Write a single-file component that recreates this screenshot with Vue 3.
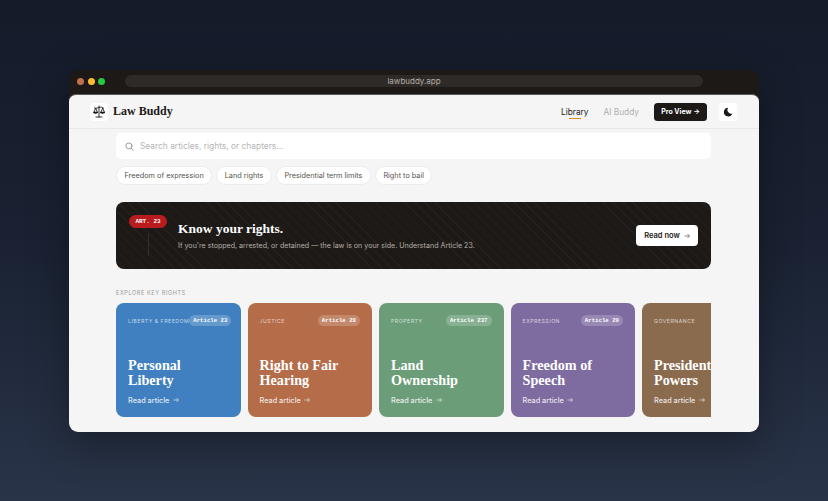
<script setup>
const chips = ['Freedom of expression', 'Land rights', 'Presidential term limits', 'Right to bail']

const cards = [
    { tag: 'Liberty & Freedom', article: 'Article 23', title: ['Personal', 'Liberty'], color: '#4080c0' },
    { tag: 'Justice', article: 'Article 28', title: ['Right to Fair', 'Hearing'], color: '#b56c48' },
    { tag: 'Property', article: 'Article 237', title: ['Land', 'Ownership'], color: '#6b9e78' },
    { tag: 'Expression', article: 'Article 29', title: ['Freedom of', 'Speech'], color: '#7e6ca0' },
    { tag: 'Governance', article: 'Article 98', title: ['Presidential', 'Powers'], color: '#8b6b4e' },
]
</script>

<template>
    <div class="page">
        <div class="window">
            <!-- Browser chrome -->
            <div class="chrome">
                <div class="dots">
                    <span class="dot red"></span>
                    <span class="dot yellow"></span>
                    <span class="dot green"></span>
                </div>
                <div class="url">lawbuddy.app</div>
            </div>

            <div class="content">
                <header class="nav">
                    <div class="brand">
                        <span class="logo">
                            <svg width="12" height="13" viewBox="0 0 24 26" fill="none" stroke="#1c1917" stroke-width="1.800" stroke-linecap="round" stroke-linejoin="round">
                                <path d="M12 2v22" />
                                <path d="M6 24h12" />
                                <path d="M3 6c3 1 6 0 9-1s6-1 9 1" />
                                <path d="M5 7l-3.500 8c1 2.500 6 2.500 7 0z" />
                                <path d="M19 7l-3.500 8c1 2.500 6 2.500 7 0z" />
                                <path d="M2 15h6.500M15.500 15h7" stroke-width="3" />
                            </svg>
                        </span>
                        <span class="brand-name">Law Buddy</span>
                    </div>
                    <nav class="links">
                        <span class="link active">Library</span>
                        <span class="link">AI Buddy</span>
                    </nav>
                    <button class="pro">Pro View →</button>
                    <button class="theme">
                        <svg width="10" height="10" viewBox="0 0 24 24" fill="#1c1917">
                            <path d="M12.500 1.500a10.500 10.500 0 1 0 10 14A9 9 0 0 1 12.500 1.500z" />
                        </svg>
                    </button>
                </header>

                <main class="main">
                    <div class="search">
                        <svg width="9" height="9" viewBox="0 0 24 24" fill="none" stroke="#8a8a8a" stroke-width="2.200" stroke-linecap="round">
                            <circle cx="10.500" cy="10.500" r="8" />
                            <path d="M16.500 16.500L22 22" />
                        </svg>
                        <span>Search articles, rights, or chapters...</span>
                    </div>

                    <div class="chips">
                        <span v-for="chip in chips" :key="chip" class="chip">{{ chip }}</span>
                    </div>

                    <section class="banner">
                        <div class="pin">
                            <span class="pin-badge">ART. 23</span>
                            <span class="pin-line"></span>
                        </div>
                        <div class="banner-text">
                            <h2>Know your rights.</h2>
                            <p>If you're stopped, arrested, or detained — the law is on your side. Understand Article 23.</p>
                        </div>
                        <button class="read-now">
                            Read now
                            <svg width="6" height="6" viewBox="0 0 12 12" fill="none" stroke="#44403c" stroke-width="1.200">
                                <path d="M1 6h10M7 2l4 4-4 4" />
                            </svg>
                        </button>
                    </section>

                    <div class="section-label">Explore key rights</div>

                    <div class="cards">
                        <article v-for="card in cards" :key="card.article" class="card" :style="{ background: card.color }">
                            <div class="card-top">
                                <span class="card-tag">{{ card.tag }}</span>
                                <span class="card-article">{{ card.article }}</span>
                            </div>
                            <h3>
                                <span v-for="line in card.title" :key="line">{{ line }}</span>
                            </h3>
                            <div class="card-link">
                                Read article
                                <svg width="6" height="6" viewBox="0 0 12 12" fill="none" stroke="currentColor" stroke-width="1.300">
                                    <path d="M1 6h10M7 2l4 4-4 4" />
                                </svg>
                            </div>
                        </article>
                    </div>
                </main>
            </div>
        </div>
    </div>
</template>

<style scoped>
    .page {
        width: 828px;
        height: 501px;
        box-sizing: border-box;
        padding: 70px 69px 0;
        overflow: hidden;
        background: linear-gradient(180deg, #141b29 0%, #1a2233 50%, #2a3449 100%);
        font-family: Inter, 'Liberation Sans', sans-serif;
    }

    .window {
        width: 690px;
        height: 362px;
        border-radius: 9px;
        overflow: hidden;
        background: #1c1917;
        box-shadow: 0 12px 40px rgba(0, 0, 0, 0.35);
    }

    .chrome {
        height: 24px;
        box-sizing: border-box;
        display: flex;
        align-items: center;
        padding: 0 8px 2px;
        gap: 20px;
    }
    .dots {
        display: flex;
        gap: 3.500px;
    }
    .dot {
        width: 7px;
        height: 7px;
        border-radius: 50%;
    }
    .red {
        background: #c0714f;
    }
    .yellow {
        background: #febc2e;
    }
    .green {
        background: #28c840;
    }
    .url {
        width: 578px;
        height: 12px;
        border-radius: 6px;
        background: #2e2a27;
        color: #b5afaa;
        font-size: 8px;
        line-height: 12px;
        text-align: center;
    }

    .content {
        height: 338px;
        background: #f5f5f5;
        border-top: 1px solid #5a5a60;
        border-radius: 7px 7px 0 0;
        box-sizing: border-box;
    }

    .nav {
        height: 34px;
        box-sizing: border-box;
        display: flex;
        align-items: center;
        padding: 0 22px 0 21px;
        border-bottom: 1px solid #e8e8e8;
    }
    .brand {
        display: flex;
        align-items: center;
        gap: 5px;
        margin-right: auto;
    }
    .logo {
        width: 18px;
        height: 18px;
        border-radius: 4px;
        background: #fff;
        display: flex;
        align-items: center;
        justify-content: center;
    }
    .brand-name {
        font-family: 'Liberation Serif', serif;
        font-weight: 700;
        font-size: 12px;
        color: #1c1917;
    }
    .links {
        display: flex;
        gap: 15px;
        margin-right: 15px;
    }
    .link {
        position: relative;
        font-size: 8.300px;
        line-height: 10px;
        color: #b0b0b0;
    }
    .link.active {
        color: #1c1917;
    }
    .link.active::after {
        content: '';
        position: absolute;
        left: 8px;
        right: 8px;
        bottom: -2px;
        height: 1px;
        background: #e08a2c;
    }
    .pro {
        width: 53px;
        height: 18px;
        margin-right: 12px;
        padding: 0;
        border: none;
        border-radius: 3.500px;
        background: #1c1917;
        color: #fff;
        font-family: inherit;
        font-weight: 700;
        font-size: 7px;
    }
    .theme {
        width: 18px;
        height: 18px;
        padding: 0;
        border: none;
        border-radius: 4px;
        background: #fff;
        display: flex;
        align-items: center;
        justify-content: center;
    }

    .main {
        width: 595px;
        margin-left: 47px;
        padding-top: 4px;
    }

    .search {
        height: 26px;
        box-sizing: border-box;
        display: flex;
        align-items: center;
        gap: 6px;
        padding: 0 9px;
        background: #fff;
        border-radius: 5px;
        color: #b5b5b5;
        font-size: 8.400px;
    }

    .chips {
        display: flex;
        gap: 4px;
        margin-top: 7px;
    }
    .chip {
        height: 19px;
        box-sizing: border-box;
        line-height: 17px;
        padding: 0 7.500px;
        border: 1px solid #ececec;
        border-radius: 10px;
        background: #fff;
        color: #57534e;
        font-size: 7.300px;
    }

    .banner {
        height: 67px;
        box-sizing: border-box;
        margin-top: 17px;
        display: flex;
        align-items: center;
        padding: 0 13px;
        border-radius: 8px;
        background: repeating-linear-gradient(45deg, #1c1917 0 6px, #24201d 6px 7px);
        color: #fff;
    }
    .pin {
        align-self: flex-start;
        margin-top: 13px;
        width: 49px;
        display: flex;
        flex-direction: column;
    }
    .pin-badge {
        width: 38px;
        height: 13px;
        line-height: 13px;
        border-radius: 7px;
        background: #b91c1c;
        text-align: center;
        font-family: 'Liberation Mono', monospace;
        font-weight: 700;
        font-size: 6px;
    }
    .pin-line {
        width: 1px;
        height: 22px;
        margin: 6px 0 0 19px;
        background: #35302d;
    }
    .banner-text {
        flex: 1;
        padding-top: 1px;
    }
    h2 {
        margin: 0;
        font-family: 'Liberation Serif', serif;
        font-weight: 700;
        font-size: 13.500px;
        line-height: 18px;
    }
    p {
        margin: 2px 0 0;
        font-size: 7.100px;
        line-height: 12px;
        color: #b5b0aa;
    }
    .read-now {
        width: 62px;
        height: 21px;
        padding: 0;
        border: none;
        border-radius: 4px;
        background: #fff;
        color: #1c1917;
        font-family: inherit;
        font-weight: 600;
        font-size: 7.500px;
        display: flex;
        align-items: center;
        justify-content: center;
        gap: 4px;
    }

    .section-label {
        margin-top: 21px;
        font-size: 5.600px;
        line-height: 7px;
        letter-spacing: 0.1em;
        text-transform: uppercase;
        color: #9a9a9a;
    }

    .cards {
        display: flex;
        gap: 7px;
        margin-top: 6px;
        overflow: hidden;
    }
    .card {
        flex: 0 0 124.500px;
        min-width: 0;
        height: 114px;
        box-sizing: border-box;
        display: flex;
        flex-direction: column;
        padding: 12px 12px 0;
        border-radius: 8px;
        color: #fff;
    }
    .card-top {
        display: flex;
        justify-content: space-between;
        align-items: center;
        height: 11px;
        white-space: nowrap;
    }
    .card-tag {
        font-size: 5.200px;
        letter-spacing: 0.1em;
        text-transform: uppercase;
        color: rgba(255, 255, 255, 0.7);
    }
    .card-article {
        padding: 0 4px;
        height: 11px;
        line-height: 11px;
        border-radius: 6px;
        background: rgba(255, 255, 255, 0.2);
        font-family: 'Liberation Mono', monospace;
        font-weight: 700;
        font-size: 5.700px;
    }
    h3 {
        margin: 32px 0 0;
        display: flex;
        flex-direction: column;
        font-family: 'Liberation Serif', serif;
        font-weight: 700;
        font-size: 14.200px;
        line-height: 15px;
        white-space: nowrap;
    }
    .card-link {
        margin-top: 7.500px;
        display: flex;
        align-items: center;
        gap: 3.500px;
        font-size: 7.300px;
        line-height: 9px;
        font-weight: 500;
        color: rgba(255, 255, 255, 0.85);
    }
</style>

<style>
    html,
    body {
        margin: 0;
        background: #1a2233;
    }
</style>
